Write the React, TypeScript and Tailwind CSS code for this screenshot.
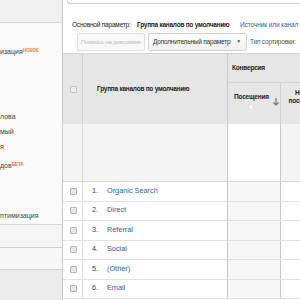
import React from 'react';

const Checkbox: React.FC = () => (
  <div className="w-[7px] h-[7px] border border-[#b8b8b8] bg-[#e6e6e6] rounded-[1px]" />
);

const rows = ['Organic Search', 'Direct', 'Referral', 'Social', '(Other)', 'Email'];

const App: React.FC = () => {
  return (
    <div className="w-[300px] h-[300px] overflow-hidden flex bg-white font-['Liberation_Sans',Arial,sans-serif] text-[#333]">
      {/* sidebar */}
      <aside className="w-[63px] shrink-0 flex flex-col bg-[#fafafa] border-r border-[#cacaca] text-[7px] text-[#444] whitespace-nowrap overflow-hidden">
        <div className="h-[23px] shrink-0 bg-[#f0f0f0] border-b border-[#d6d6d6]" />
        <div className="h-[202px] shrink-0 flex flex-col border-b border-[#d6d6d6]">
          <div className="mt-[21px] h-[15px] leading-[15px]">
            изация<sup className="text-[4.5px] font-bold text-[#e8843a]">НОВОЕ</sup>
          </div>
          <div className="mt-[50px] h-[15px] leading-[15px]">лова</div>
          <div className="h-[15px] leading-[15px]">мый</div>
          <div className="h-[15px] leading-[15px]">я</div>
          <div className="mt-[4px] h-[15px] leading-[15px]">
            дов<sup className="text-[4.5px] font-bold text-[#ef6f2e]">BETA</sup>
          </div>
          <div className="mt-[35px] h-[15px] leading-[15px]">птимизация</div>
        </div>
        <div className="h-[23px] shrink-0 bg-[#f5f5f5] border-b border-[#d0d0d0]" />
        <div className="h-[22px] shrink-0 bg-[#f7f7f7] border-b border-[#d0d0d0]" />
        <div className="flex-1 bg-[#ebebeb]" />
      </aside>

      {/* main */}
      <main className="flex-1 min-w-0 flex flex-col overflow-hidden">
        <div className="ml-[4px] h-[4px] shrink-0 border-b border-l border-[#d0d0d0] rounded-bl-[3px]" />

        <div className="mt-[14px] h-[14px] shrink-0 flex items-center pl-[9px] text-[6.5px] whitespace-nowrap">
          <span className="w-[65px] shrink-0 text-[#222] tracking-[-0.2px]">Основной параметр:</span>
          <span className="w-[103px] shrink-0 font-bold text-[#222] tracking-[-0.25px]">Группа каналов по умолчанию</span>
          <span className="shrink-0 text-[#2d5fa8] tracking-[-0.1px]">Источник или канал</span>
        </div>

        <div className="mt-[1px] h-[18px] shrink-0 flex items-center pl-[14px] gap-[3px] whitespace-nowrap">
          <div className="w-[68px] h-[18px] shrink-0 flex items-center justify-center border border-[#dedede] rounded-[2px] bg-[#f8f8f8] text-[6px] tracking-[-0.3px] text-[#c0c0c0]">
            Показать на диаграмме
          </div>
          <div className="w-[99px] h-[18px] shrink-0 flex items-center justify-between pl-[4px] pr-[5px] border border-[#cfcfcf] rounded-[2px] bg-gradient-to-b from-white to-[#f1f1f1] text-[6.5px] tracking-[-0.2px] text-[#333]">
            <span>Дополнительный параметр</span>
            <span className="text-[5px] text-[#555]">▼</span>
          </div>
          <span className="shrink-0 text-[6.5px] tracking-[-0.2px] text-[#555]">Тип сортировки:</span>
        </div>

        {/* table */}
        <div className="mt-[2px] flex flex-col text-[6.5px]">
          {/* header */}
          <div className="flex h-[71px] shrink-0 bg-[#e6e6e6] border-t border-[#d4d4d4]">
            <div className="w-[20px] shrink-0 border-r border-[#d2d2d2] flex items-center justify-center pl-[2px]">
              <div className="w-[7px] h-[7px] border border-[#c4c4c4] bg-[#ececec] rounded-[1px]" />
            </div>
            <div className="w-[145px] shrink-0 border-r border-[#c8c8c8] flex items-center pl-[14px] font-bold tracking-[-0.25px] text-[#222] whitespace-nowrap">
              Группа каналов по умолчанию
            </div>
            <div className="w-[102px] shrink-0 flex flex-col">
              <div className="h-[29px] shrink-0 border-b border-[#d4d4d4] flex items-center pl-[4px] font-bold tracking-[-0.2px] text-[#222]">
                Конверсия
              </div>
              <div className="flex flex-1">
                <div className="w-[53px] shrink-0 border-r border-[#d0d0d0] flex pt-[9px] pl-[6px]">
                  <div className="flex flex-col items-center">
                    <span className="font-bold tracking-[-0.2px] text-[#222]">Посещения</span>
                    <div className="mt-[2px] w-[6px] h-[6px] rounded-full bg-white border border-[#dcdcdc]" />
                  </div>
                  <svg width="6" height="8" viewBox="0 0 6 8" className="ml-[4px] mt-[6px]">
                    <path d="M3 0 V7 M0.5 4.5 L3 7 L5.5 4.5" stroke="#777" strokeWidth="1.2" fill="none" />
                  </svg>
                </div>
                <div className="w-[49px] shrink-0 flex flex-col items-center pt-[6px] font-bold tracking-[-0.2px] text-[#222] leading-[8px] text-center">
                  <span>Новые</span>
                  <span>посещения</span>
                  <span className="text-[6px] text-[#777] mt-[1px]">%</span>
                </div>
              </div>
            </div>
          </div>
          <div className="flex h-[58px] shrink-0 border-b border-[#d8d8d8]">
            <div className="w-[20px] shrink-0 bg-[#f3f3f3] border-r border-[#d8d8d8]" />
            <div className="w-[145px] shrink-0 bg-[#f3f3f3] border-r border-[#c8c8c8]" />
            <div className="w-[53px] shrink-0 bg-white border-r border-[#c8c8c8]" />
            <div className="w-[49px] shrink-0 bg-[#f3f3f3]" />
          </div>

          {/* rows */}
          {rows.map((r, i) => (
            <div key={r} className="flex h-[19.5px] shrink-0 border-b border-[#e2e2e2] text-[7.3px]">
              <div className="w-[20px] shrink-0 border-r border-[#dcdcdc] flex items-center justify-center pl-[2px]">
                <Checkbox />
              </div>
              <div className="w-[145px] shrink-0 border-r border-[#c8c8c8] flex items-center pl-[9px] whitespace-nowrap">
                <span className="w-[15px] shrink-0 text-[#444]">{i + 1}.</span>
                <span className="text-[#2d5fa8]">{r}</span>
              </div>
              <div className="w-[53px] shrink-0 bg-[#f7f7f7] border-r border-[#c8c8c8]" />
              <div className="w-[49px] shrink-0 bg-white" />
            </div>
          ))}
        </div>
      </main>
    </div>
  );
};

export default App;
